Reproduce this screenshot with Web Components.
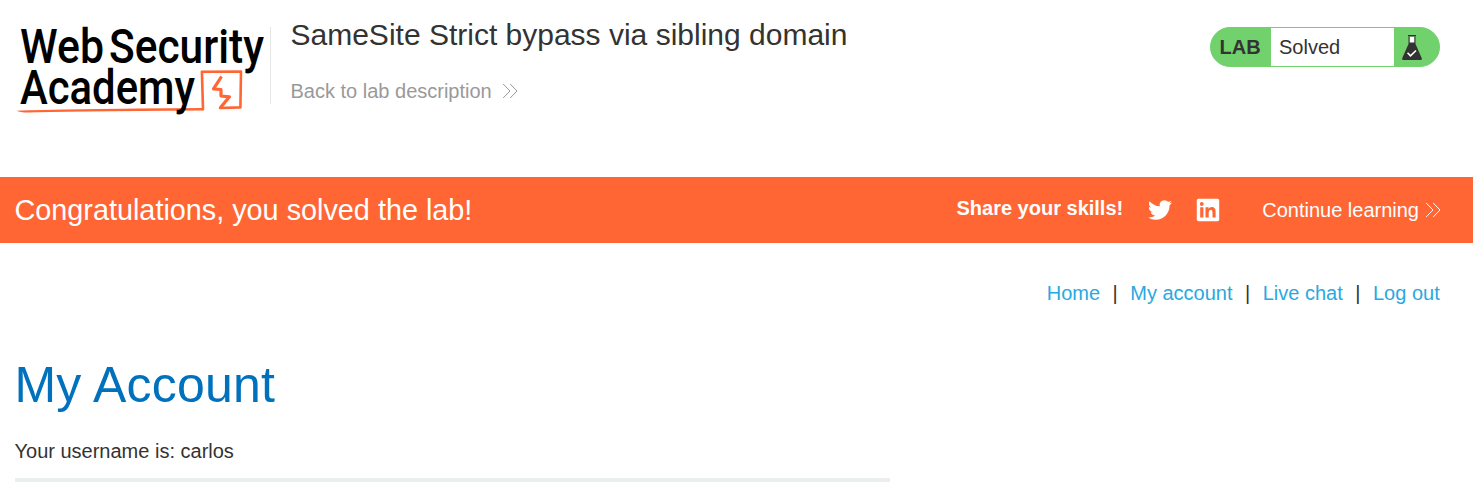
<!DOCTYPE html>
<html lang="en"><head><meta charset="utf-8"><title>SameSite Strict bypass via sibling domain</title>
<style>body{margin:0;background:#fff;color:#333332;font:20px/24px "Liberation Sans",Arial,sans-serif;overflow:hidden}</style></head>
<body><lab-page></lab-page>
<script>
const define=(name,html)=>customElements.define(name,class extends HTMLElement{
  constructor(){super();this.attachShadow({mode:'open'}).innerHTML=html;}
});
define('academy-logo',`<style>:host{display:block;width:270px;height:120px}svg{display:block;overflow:visible}text{font-family:Roboto,sans-serif;font-weight:500;font-size:47.500px;fill:#000}</style>
<svg width="270" height="120" viewBox="0 0 270 120">
<path d="M203 109.300L201.900 71.800L241 71.500L240.400 107.400L220 108" fill="none" stroke="#ff6633" stroke-width="2.600" stroke-linejoin="round" stroke-linecap="round"/>
<path d="M16.500 110.700Q60 108.800 203 107.900V110.600Q60 111.500 28 112.600Q20 112.300 16.500 110.700Z" fill="#ff6633"/>
<path d="M221.500 76.500L213.500 88.800L221 89.500L221 96L229.500 96.800L220.500 107.500" fill="none" stroke="#ff6633" stroke-width="3.200" stroke-linejoin="round"/>
<text x="20" y="63" textLength="84" lengthAdjust="spacingAndGlyphs">Web</text>
<text x="109" y="63" textLength="155" lengthAdjust="spacingAndGlyphs">Security</text>
<text x="20" y="104" textLength="175" lengthAdjust="spacingAndGlyphs">Academy</text>
</svg>`);
define('double-chevron',`<style>:host{display:inline-block;width:16px;height:16px}svg{display:block}</style>
<svg width="16" height="16" viewBox="0 0 16 16" fill="none" stroke="currentColor" stroke-width="1"><path d="M1.200 1L8 8L1.200 15M8.200 1L15 8L8.200 15"/></svg>`);
define('lab-status',`<style>:host{display:flex;box-sizing:border-box;width:230px;height:40px;border:1px solid #71d16d;border-radius:20px;overflow:hidden;background:#71d16d;line-height:38px}
b{width:60px;box-sizing:border-box;padding-left:8.500px}span{width:123px;box-sizing:border-box;padding-left:8px;background:#fff}svg{margin:6px 0 0 7px}</style>
<b><slot name="label"></slot></b><span><slot></slot></span>
<svg width="22" height="28" viewBox="0 0 22 28"><path d="M7.500 3H14.500V10L20.800 24.300Q21.500 26 19.800 26H2.200Q.500 26 1.200 24.300L7.500 10Z" fill="#333332"/><path d="M8.700 2.500H13.300V8.500H8.700Z" fill="#fff"/><path d="M7 1.700H15" stroke="#333332" stroke-width="1.400"/><path d="M6.500 18.700L9.500 21.800L15 16.500" fill="none" stroke="#fff" stroke-width="1.600"/></svg>`);
define('lab-header',`<style>:host{display:flex;height:177px}
.copy{box-sizing:border-box;padding:17px 0 0 19.500px;flex:1}.rule{width:1px;height:77px;margin-top:27px;background:#e6e6e6}
h2{margin:0;font-size:30px;line-height:36px;font-weight:400;white-space:nowrap}a{display:flex;align-items:center;margin-top:26px;color:#999}double-chevron{margin-left:10px}lab-status{margin:27px 33px 0 0}</style>
<academy-logo></academy-logo><div class="rule"></div><div class="copy"><h2>SameSite Strict bypass via sibling domain</h2><a>Back to lab description<double-chevron></double-chevron></a></div><lab-status><span slot="label">LAB</span>Solved</lab-status>`);
define('solved-banner',`<style>:host{display:flex;box-sizing:border-box;height:66px;padding:0 32.500px 0 14.500px;background:#ff6633;color:#fff;align-items:center}
.message{font-size:28.800px;line-height:36px;flex:1}.share{margin:-4px 25px 0 0}.tw{margin-right:24px}.in{margin-right:42px}double-chevron{margin-left:5.500px}a{display:flex;align-items:center}</style>
<div class="message">Congratulations, you solved the lab!</div><b class="share">Share your skills!</b>
<svg class="tw" width="24" height="24" viewBox="0 0 24 24" fill="#fff"><path d="M23.950 4.570a10 10 0 0 1-2.820.780 4.960 4.960 0 0 0 2.160-2.720c-.950.550-2 .950-3.130 1.180a4.920 4.920 0 0 0-8.380 4.480C7.690 8.100 4.070 6.130 1.640 3.160a4.820 4.820 0 0 0-.670 2.470c0 1.710.870 3.210 2.190 4.100a4.900 4.900 0 0 1-2.230-.620v.060a4.920 4.920 0 0 0 3.950 4.830 5 5 0 0 1-2.210.080 4.940 4.940 0 0 0 4.600 3.420A9.870 9.870 0 0 1 0 19.540a13.990 13.990 0 0 0 7.550 2.210c9.050 0 14-7.500 14-13.980 0-.210 0-.420-.020-.630a9.940 9.940 0 0 0 2.420-2.570z"/></svg>
<svg class="in" width="24" height="24" viewBox="0 0 24 24"><rect x=".8" y=".8" width="22.400" height="22.400" rx="1.600" fill="#fff"/><g fill="#ff6633"><circle cx="5.800" cy="6" r="1.900"/><path d="M4.200 9.300H7.400V19.500H4.200ZM9.500 9.300H12.500V10.700Q13.500 9 15.800 9Q19.600 9 19.600 13.500V19.500H16.500V14.300Q16.500 11.800 14.800 11.800Q12.700 11.800 12.700 14.300V19.500H9.500Z"/></g></svg>
<a>Continue learning<double-chevron></double-chevron></a>`);
define('account-nav',`<style>:host{display:flex;justify-content:flex-end;padding:38px 33.300px 0 0;color:#29a9e1}i{font-style:normal;color:#333332;width:30.200px;text-align:center}</style>
<a>Home</a><i>|</i><a>My account</a><i>|</i><a>Live chat</a><i>|</i><a>Log out</a>`);
define('account-content',`<style>:host{display:block;padding:50px 0 0 15px}h1{margin:0 0 0 -.5px;font-size:50px;line-height:60px;font-weight:400;letter-spacing:.22px;color:#0071bc}p{margin:24px 0 15px -.5px}.rule{width:875px;height:4px;background:#eaeff0}</style>
<h1>My Account</h1><p>Your username is: carlos</p><div class="rule"></div>`);
define('lab-page',`<style>:host{display:block;height:482px;overflow:hidden}</style><lab-header></lab-header><solved-banner></solved-banner><account-nav></account-nav><account-content></account-content>`);
</script></body></html>
